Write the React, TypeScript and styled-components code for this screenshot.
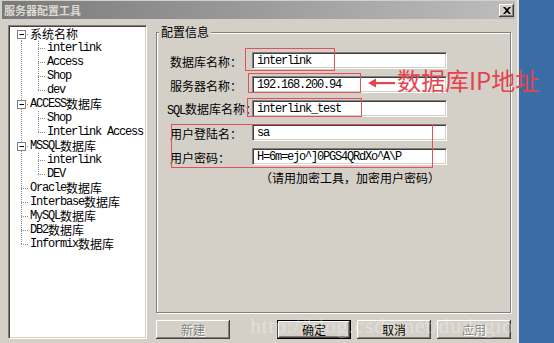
import React from "react";
import styled, { createGlobalStyle } from "styled-components";

const GlobalStyle = createGlobalStyle`
  html, body { margin: 0; padding: 0; background: #3a6ca6; }
  body { width: 554px; height: 343px; overflow: hidden; font-family: "Noto Sans CJK SC", sans-serif; }
`;

const CJK_RE = /([\u3000-\u303f\u4e00-\u9fff\uff00-\uffef]+)/;

const Latin = styled.span`
  font-family: "Liberation Mono", monospace;
  font-size: 12px;
  letter-spacing: -1.2px;
  color: #000;
`;

const Cjk = styled.span`
  font-family: "Noto Sans CJK SC", sans-serif;
  font-size: 12px;
`;

function Mixed({ text }: { text: string }) {
  const parts = text.split(CJK_RE).filter(Boolean);
  return (
    <>
      {parts.map((p, i) =>
        CJK_RE.test(p) ? <Cjk key={i}>{p}</Cjk> : <Latin key={i}>{p}</Latin>
      )}
    </>
  );
}

const Screen = styled.div`
  position: relative;
  width: 554px;
  height: 343px;
  display: flex;
  background: #3a6ca6;
  overflow: hidden;
`;

const Window = styled.div`
  box-sizing: border-box;
  width: 519px;
  height: 343px;
  flex: none;
  background: #d4d0c8;
  padding: 0 2px 0 2px;
  border-right: 2px solid #e6e3dd;
  display: flex;
  flex-direction: column;
`;

const TitleBar = styled.div`
  height: 18px;
  margin-top: 1px;
  display: flex;
  align-items: center;
  justify-content: space-between;
  padding: 0 1px 0 2px;
  background: linear-gradient(to right, #7a7a7a, #bdbdbd);
`;

const Title = styled.span`
  font-family: "Noto Sans CJK SC", sans-serif;
  font-size: 11px;
  font-weight: bold;
  color: #dcd9d2;
  line-height: 14px;
`;

const CloseBtn = styled.div`
  box-sizing: border-box;
  width: 15px;
  height: 13px;
  background: #d4d0c8;
  box-shadow: inset -1px -1px #404040, inset 1px 1px #fff, inset -2px -2px #808080;
  display: flex;
  align-items: center;
  justify-content: center;
`;

const Body = styled.div`
  flex: 1;
  display: flex;
  gap: 9px;
  padding: 6px 0 4px 6px;
  min-height: 0;
`;

const TreePanel = styled.div`
  box-sizing: border-box;
  width: 139px;
  height: 314px;
  background: #fff;
  border: 1px solid;
  border-color: #808080 #fff #fff #808080;
  box-shadow: inset 1px 1px #404040, inset -1px -1px #d4d0c8;
  padding: 1px 0 0 1px;
  display: flex;
  flex-direction: column;
`;

const TreeRow = styled.div`
  height: 14px;
  display: flex;
  align-items: center;
  line-height: 14px;
  white-space: nowrap;
`;

const RightCol = styled.div`
  width: 355px;
  display: flex;
  flex-direction: column;
`;

const Group = styled.fieldset`
  box-sizing: border-box;
  height: 289px;
  margin: 0;
  padding: 0;
  min-inline-size: 0;
  border: 1px solid #808080;
  box-shadow: inset 1px 1px #fff, 1px 1px #fff;
`;

const Legend = styled.legend`
  padding: 0 2px;
  margin-left: 2px;
  background: #d4d0c8;
  font-family: "Noto Sans CJK SC", sans-serif;
  font-size: 12px;
  line-height: 14px;
  color: #000;
`;

const Form = styled.div`
  padding: 13px 0 0 13px;
  display: flex;
  flex-direction: column;
  gap: 7px;
`;

const FieldRow = styled.div`
  height: 17px;
  display: flex;
  align-items: center;
`;

const Label = styled.div<{ $shift?: number }>`
  width: 82px;
  flex: none;
  margin-left: ${(p) => p.$shift ?? 0}px;
  margin-right: ${(p) => -(p.$shift ?? 0)}px;
  white-space: nowrap;
  line-height: 14px;
  color: #000;
`;

const Field = styled.div`
  position: relative;
  box-sizing: border-box;
  width: 195px;
  height: 17px;
  background: #fff;
  border: 1px solid;
  border-color: #808080 #fff #fff #808080;
  box-shadow: inset 1px 1px #404040, inset -1px -1px #d4d0c8;
  padding: 0 0 0 4px;
  display: flex;
  align-items: center;
  line-height: 14px;
  white-space: nowrap;
`;

const Note = styled.div`
  margin: 0 0 0 90px;
  line-height: 12px;
  font-size: 12px;
  color: #000;
`;

const ButtonRow = styled.div`
  margin-top: 7px;
  height: 19px;
  display: flex;
  justify-content: space-between;
`;

const ButtonGroup = styled.div`
  display: flex;
  gap: 6px;
`;

const Button = styled.div<{ $default?: boolean; $disabled?: boolean }>`
  box-sizing: border-box;
  width: 74px;
  height: 19px;
  background: #d4d0c8;
  display: flex;
  align-items: center;
  justify-content: center;
  font-family: "Noto Sans CJK SC", sans-serif;
  font-size: 12px;
  line-height: 14px;
  color: ${(p) => (p.$disabled ? "#808080" : "#000")};
  text-shadow: ${(p) => (p.$disabled ? "1px 1px #fff" : "none")};
  border: ${(p) => (p.$default ? "1px solid #000" : "none")};
  box-shadow: inset -1px -1px #404040, inset 1px 1px #fff, inset -2px -2px #808080;
`;

const Overlay = styled.div`
  position: absolute;
  inset: 0;
  pointer-events: none;
`;

const RedBox = styled.div<{ $x: number; $y: number; $w: number; $h: number }>`
  position: absolute;
  left: ${(p) => p.$x}px;
  top: ${(p) => p.$y}px;
  width: ${(p) => p.$w}px;
  height: ${(p) => p.$h}px;
  box-sizing: border-box;
  border: 1px solid #e2505c;
`;

const Arrow = styled.svg`
  position: absolute;
  left: 366px;
  top: 76px;
`;

const AnnoText = styled.div`
  position: absolute;
  left: 397px;
  top: 66px;
  font-family: "Noto Sans CJK SC", sans-serif;
  font-size: 24px;
  line-height: 28px;
  color: #e4444e;
  white-space: nowrap;
`;

const Watermark = styled.div`
  position: absolute;
  left: 250px;
  top: 314px;
  font-family: "Liberation Serif", serif;
  font-size: 22px;
  line-height: 24px;
  letter-spacing: 0.6px;
  color: rgba(255, 255, 255, 0.32);
  white-space: nowrap;
`;

type Node = { label: string; kids?: string[] };
const tree: Node[] = [
  { label: "系统名称", kids: ["interlink", "Access", "Shop", "dev"] },
  { label: "ACCESS数据库", kids: ["Shop", "Interlink Access"] },
  { label: "MSSQL数据库", kids: ["interlink", "DEV"] },
  { label: "Oracle数据库" },
  { label: "Interbase数据库" },
  { label: "MySQL数据库" },
  { label: "DB2数据库" },
  { label: "Informix数据库" },
];

const LINE = "#8c8c8c";

function Gutter({
  level,
  hasKids,
  first,
  lastRoot,
  lastChild,
}: {
  level: number;
  hasKids?: boolean;
  first?: boolean;
  lastRoot?: boolean;
  lastChild?: boolean;
}) {
  const w = level === 0 ? 20 : 37;
  return (
    <svg width={w} height={14} style={{ flex: "none" }}>
      {level === 0 ? (
        <>
          <line x1={11.5} y1={first ? 7 : 0} x2={11.5} y2={lastRoot ? 7 : 14} stroke={LINE} strokeDasharray="1 1" />
          <line x1={11} y1={7.5} x2={19} y2={7.5} stroke={LINE} strokeDasharray="1 1" />
          {hasKids && (
            <>
              <rect x={7.5} y={3.5} width={8} height={8} fill="#fff" stroke="#808080" />
              <line x1={9.5} y1={7.5} x2={14} y2={7.5} stroke="#000" />
            </>
          )}
        </>
      ) : (
        <>
          <line x1={11.5} y1={0} x2={11.5} y2={14} stroke={LINE} strokeDasharray="1 1" />
          <line x1={28.5} y1={0} x2={28.5} y2={lastChild ? 7 : 14} stroke={LINE} strokeDasharray="1 1" />
          <line x1={28} y1={7.5} x2={35} y2={7.5} stroke={LINE} strokeDasharray="1 1" />
        </>
      )}
    </svg>
  );
}

function Tree() {
  const rows: React.ReactNode[] = [];
  tree.forEach((n, i) => {
    rows.push(
      <TreeRow key={`r${i}`}>
        <Gutter level={0} hasKids={!!n.kids} first={i === 0} lastRoot={i === tree.length - 1} />
        <Mixed text={n.label} />
      </TreeRow>
    );
    n.kids?.forEach((k, j) => {
      rows.push(
        <TreeRow key={`r${i}-${j}`}>
          <Gutter level={1} lastChild={j === n.kids!.length - 1} />
          <Mixed text={k} />
        </TreeRow>
      );
    });
  });
  return <TreePanel>{rows}</TreePanel>;
}

const fields: { label: string; value: string; shift?: number }[] = [
  { label: "数据库名称：", value: "interlink" },
  { label: "服务器名称：", value: "192.168.200.94" },
  { label: "SQL数据库名称：", value: "interlink_test", shift: -3 },
  { label: "用户登陆名：", value: "sa" },
  { label: "用户密码：", value: "H=6m=ejo^]0PGS4QRdXo^A\\P" },
];

export default function App() {
  return (
    <>
      <GlobalStyle />
      <Screen>
        <Window>
          <TitleBar>
            <Title>服务器配置工具</Title>
            <CloseBtn>
              <svg width="8" height="7" viewBox="0 0 8 7">
                <path d="M0 0h2l2 2 2-2h2L5 3.5 8 7H6L4 5 2 7H0l3-3.5z" fill="#000" />
              </svg>
            </CloseBtn>
          </TitleBar>
          <Body>
            <Tree />
            <RightCol>
              <Group>
                <Legend>配置信息</Legend>
                <Form>
                  {fields.map((f) => (
                    <FieldRow key={f.label}>
                      <Label $shift={f.shift}>
                        <Mixed text={f.label} />
                      </Label>
                      <Field>
                        <Latin>{f.value}</Latin>
                      </Field>
                    </FieldRow>
                  ))}
                  <Note>（请用加密工具，加密用户密码）</Note>
                </Form>
              </Group>
              <ButtonRow>
                <Button $disabled>新建</Button>
                <ButtonGroup>
                  <Button $default>确定</Button>
                  <Button>取消</Button>
                  <Button $disabled>应用</Button>
                </ButtonGroup>
              </ButtonRow>
            </RightCol>
          </Body>
        </Window>
        <Overlay>
          <RedBox $x={245} $y={48} $w={90} $h={23} />
          <RedBox $x={248} $y={73} $w={113} $h={20} />
          <RedBox $x={247} $y={98} $w={115} $h={19} />
          <RedBox $x={171} $y={124} $w={262} $h={44} />
          <Arrow width="32" height="14" viewBox="0 0 32 14">
            <polygon points="2,7 10,2.5 10,11.5" fill="#e4444e" />
            <rect x="9" y="6" width="20" height="2.2" fill="#e4444e" />
          </Arrow>
          <AnnoText>数据库IP地址</AnnoText>
          <Watermark>http://blog.csdn.net/dudagio</Watermark>
        </Overlay>
      </Screen>
    </>
  );
}
